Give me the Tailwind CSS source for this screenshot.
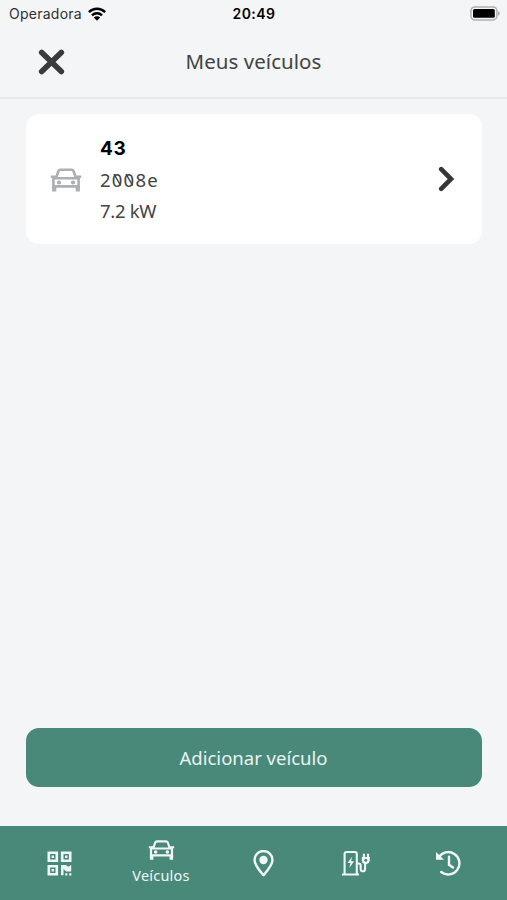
<!DOCTYPE html>
<html lang="pt">
<head>
<meta charset="utf-8">
<title>Meus veículos</title>
<script src="https://cdn.jsdelivr.net/npm/@tailwindcss/browser@4"></script>
</head>
<body class="bg-[#f3f5f7]">
<svg class="hidden">
  <symbol id="car" viewBox="0 0 32 24">
    <path fill="none" stroke="currentColor" stroke-width="2.6" stroke-linejoin="round" d="M3.4 21V10.2h25.2V21M3.2 18.4h25.6M6 10 8.5 3q.5-1.3 2-1.3h11q1.5 0 2 1.3L26 10M.8 8.7h5M26.2 8.7h5"/>
    <path fill="currentColor" d="M2.1 18h4.2v5.6H2.1zM25.7 18h4.2v5.6h-4.2z"/>
    <circle cx="9" cy="14.5" r="2.1" fill="currentColor"/><circle cx="23" cy="14.5" r="2.1" fill="currentColor"/>
  </symbol>
</svg>
<div class="flex h-[900px] w-[507px] flex-col overflow-hidden font-['Noto_Sans',sans-serif] text-[#424343]">
  <div class="grid h-7 shrink-0 grid-cols-3 items-center pb-[1px] pl-[9px] pr-[7px] font-['Inter',sans-serif]">
    <div class="flex items-center gap-[6px]">
      <span class="text-[14px] tracking-[0.25px] text-[#303132]">Operadora</span>
      <svg class="h-[14px] w-[18px]" viewBox="0 0 18 14"><g fill="none" stroke="#000" stroke-width="2.4"><path d="M.9 5.1a11.6 11.6 0 0 1 16.2 0M4 8.3a7 7 0 0 1 10 0"/></g><path d="M5.8 10.5a4.5 4.5 0 0 1 6.4 0L9 13.8z"/></svg>
    </div>
    <span class="-ml-[1px] text-center text-[14px] font-semibold tracking-[0.45px] text-black">20:49</span>
    <svg class="ml-auto h-[15px] w-[30px]" viewBox="0 0 30 15"><rect x=".9" y=".9" width="26" height="13" rx="3.8" fill="#f3f5f7" stroke="#afb0b1" stroke-width="1.5"/><rect x="3" y="3" width="21.8" height="8.8" rx="1.5"/><path d="M28 5q1.8.8 1.8 2.4T28 9.8z" fill="#afb0b1"/></svg>
  </div>
  <header class="grid h-[71px] shrink-0 grid-cols-[130px_1fr_130px] items-center border-b-2 border-[#e6e8ea]">
    <svg class="mb-[2px] ml-[38px] h-[26px] w-[27px]" viewBox="0 0 27 26"><path d="M3.7 3.5 23.3 22.5M23.3 3.5 3.7 22.5" stroke="#3a3c3c" stroke-width="5.6" stroke-linecap="round"/></svg>
    <h1 class="mb-[3px] text-center text-[20.5px] leading-7 tracking-[0.05px]">Meus veículos</h1>
  </header>
  <main class="flex flex-1 flex-col px-[26px] pt-[15px]">
    <section class="flex h-[130px] w-[456px] items-center rounded-[13px] bg-white pl-6 pr-[27px]">
      <svg class="mt-[2px] h-[24px] w-[32px] text-[#adb0b0]"><use href="#car"/></svg>
      <div class="ml-[18px] flex-1 text-[18.5px] leading-8">
        <p class="pt-[1px] font-['Inter',sans-serif] text-[19px] font-bold leading-[33px] tracking-[0.6px] text-black">43</p>
        <p class="-mt-[1px] tracking-[1.2px]">2<span class="relative">0<svg class="absolute left-0 top-[6px] h-[14px] w-[11px]" viewBox="0 0 11 14"><path d="m2 1.2 6.7 11.3" stroke="currentColor" stroke-width="1.4"/></svg></span><span class="relative">0<svg class="absolute left-0 top-[6px] h-[14px] w-[11px]" viewBox="0 0 11 14"><path d="m2 1.2 6.7 11.3" stroke="currentColor" stroke-width="1.4"/></svg></span>8e</p>
        <p class="-mt-[1px] tracking-[-0.3px]">7.2 kW</p>
      </div>
      <svg class="h-[26px] w-[17px]" viewBox="0 0 17 26"><path d="M3.2 3.2 13 13 3.2 22.8" fill="none" stroke="#353737" stroke-width="4.6" stroke-linecap="round"/></svg>
    </section>
    <button class="mb-[39px] mt-auto h-[59px] w-[456px] rounded-[13px] bg-[#49897a] pr-[1px] text-[18.5px] text-[#e9f3f1]">Adicionar veículo</button>
  </main>
  <nav class="flex h-[74px] shrink-0 items-center bg-[#49897a] pl-[9px] text-[#f0f8f7]">
    <div class="flex w-[101px] justify-center">
      <svg class="h-[25px] w-[25px]" viewBox="0 0 25 25"><path fill="none" stroke="currentColor" stroke-width="2.6" d="M1.8 1.8h8v8h-8zM15.2 1.8h8v8h-8zM1.8 15.2h8v8h-8z"/><path fill="currentColor" d="M4.6 4.6H7V7H4.6zM18 4.6h2.4V7H18zM4.6 18H7v2.4H4.6zM14 14h5l2.2 1.8L24.2 14v6.5h-5L16.5 18v6.2H14zM18.2 22.2h2.2v2.2h-2.2zM22.2 22.2h2.2v2.2h-2.2z"/></svg>
    </div>
    <div class="flex w-[102px] flex-col items-center">
      <svg class="h-[20px] w-[27px]"><use href="#car"/></svg>
      <span class="mt-[4px] text-[14.5px] leading-[22px] tracking-[0.2px]">Veículos</span>
    </div>
    <div class="flex w-[102px] justify-center">
      <svg class="h-[27px] w-[21px]" viewBox="0 0 21 27"><path fill="none" stroke="currentColor" stroke-width="2.4" stroke-linejoin="round" d="M10.5 25.2C7.8 22 1.5 15.3 1.5 10a9 9 0 0 1 18 0c0 5.3-6.3 12-9 15.2Z"/><circle cx="10.5" cy="10" r="4.2" fill="currentColor"/></svg>
    </div>
    <div class="flex w-[84px] justify-center">
      <svg class="h-[26px] w-[28px]" viewBox="0 0 28 26"><g fill="none" stroke="currentColor" stroke-width="2.1"><path d="M2.6 24V4Q2.6 2 4.6 2h8.2q2 0 2 2v20M0 24.5h17M15 13.5h1.5q2.2 0 2.2 2.2v3q0 2.6 2.2 2.6t2.2-2.6V13M21.9 3.8v4M26 3.8v4"/></g><path fill="currentColor" d="m10.3 6.6-4.8 6.5h3l-1.2 5 4.8-6.8H9zM19.8 7h8v3.8q-.6 3-3.4 3.4h-1.8q-2.4-.4-2.8-3.4z"/><circle cx="23.8" cy="10.3" r="1.5" fill="#49897a"/></svg>
    </div>
    <div class="flex w-[101px] justify-center">
      <svg class="h-[26px] w-[27px]" viewBox="0 0 27 26"><path fill="none" stroke="currentColor" stroke-width="2.4" stroke-linecap="round" d="M3.6 7.5A11.2 11.2 0 1 1 6.2 22M14 6.8v8l4 2.8"/><path fill="currentColor" d="M1 2v7.8h8z"/></svg>
    </div>
  </nav>
</div>
</body>
</html>
